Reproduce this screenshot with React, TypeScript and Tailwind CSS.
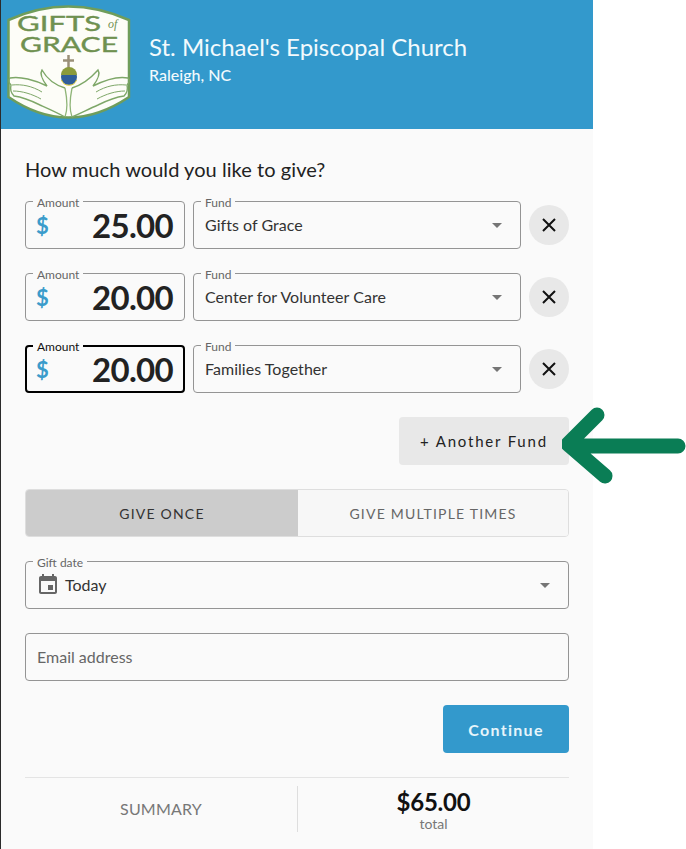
import React from "react";

const font = { fontFamily: '"Lato", "Liberation Sans", sans-serif' };

function Logo() {
  return (
    <svg width="124" height="118" viewBox="7 2 124 118" className="shrink-0">
      <path d="M8.5 20 Q68 -7 129 20 L129 97 Q68 138 8.5 97 Z" fill="#fdfdf8" stroke="#6f9d5b" strokeWidth="2.5" />
      <text x="17" y="31" fontFamily="Lato, sans-serif" fontSize="22" fill="#6f9150" stroke="#6f9150" strokeWidth="0.4" textLength="84" lengthAdjust="spacingAndGlyphs">GIFTS</text>
      <text x="108" y="28" fontFamily="Liberation Serif, serif" fontStyle="italic" fontSize="12" fill="#6f9150">of</text>
      <text x="20" y="52" fontFamily="Lato, sans-serif" fontSize="22" fill="#6f9150" stroke="#6f9150" strokeWidth="0.4" textLength="98" lengthAdjust="spacingAndGlyphs">GRACE</text>
      <path d="M68.500 55v14M63 60.500h11" stroke="#9a9078" strokeWidth="2.500" fill="none" />
      <circle cx="69" cy="77" r="8" fill="#2f5e9a" />
      <path d="M61 75a8 8 0 0 1 16 0z" fill="#8a9a3c" />
      <path d="M61.500 80a8 8 0 0 0 15 0" stroke="#d9c52f" strokeWidth="1" fill="none" />
      <path d="M65 117c3-8 2-19 0-29M72 117c-3-8-2-19 0-29" stroke="#8fb578" strokeWidth="1.300" fill="none" />
      <path d="M65 88C55 85 47 79 42 70c-2 3-1 8 5 16C35 80 20 76 10 78c-2 2-1 5 1 7-1 4 0 8 3 11 8 1 18 5 26 9 9 4 16 7 25 12" fill="none" stroke="#7ea768" strokeWidth="1.400" />
      <path d="M72 88c10-3 18-9 26-18 2 3 1 8-5 16 12-6 25-10 35-8 2 2 1 5-1 7 1 4 0 8-3 11-8 1-18 5-26 9-9 4-15 7-26 12" fill="none" stroke="#7ea768" strokeWidth="1.400" />
      <path d="M12 85c10-1 20 1 30 7M13 91c9 0 19 3 28 8M126 85c-10-1-20 1-30 7M125 91c-9 0-19 3-28 8" stroke="#7ea768" strokeWidth="1" fill="none" />
    </svg>
  );
}

function Field({ label, focused, className, children }: { label?: string; focused?: boolean; className?: string; children: React.ReactNode }) {
  return (
    <div className={`relative h-12 rounded flex items-center ${focused ? "border-2 border-black" : "border border-[#949494]"} ${className ?? ""}`}>
      {label && (
        <span className={`absolute bg-[#fafafa] px-1 text-[12px] leading-[14px] ${focused ? "left-[6px] top-[-7px] text-[#111]" : "left-[7px] top-[-6px] text-[#666]"}`}>
          {label}
        </span>
      )}
      {children}
    </div>
  );
}

function Caret() {
  return <span className="ml-auto mr-[18px] w-0 h-0 border-x-[5px] border-x-transparent border-t-[5px] border-t-[#757575]" />;
}

function Row({ amount, fund, focused }: { amount: string; fund: string; focused?: boolean }) {
  return (
    <div className="flex items-center h-12">
      <Field label="Amount" focused={focused} className="w-[160px] shrink-0">
        <span className={`${focused ? "ml-[9px]" : "ml-[10px]"} text-[22px] font-bold text-[#3b9ccb]`}>$</span>
        <span className={`ml-auto ${focused ? "mr-[10px]" : "mr-[11px]"} mt-[2px] text-[33px] font-bold tracking-[-0.7px] text-[#222]`}>{amount}</span>
      </Field>
      <Field label="Fund" className="w-[328px] ml-2 shrink-0">
        <span className="ml-[11px] text-[16px] tracking-[0.04px] text-[#333]">{fund}</span>
        <Caret />
      </Field>
      <button className="ml-2 w-10 h-10 rounded-full bg-[#e8e8e8] flex items-center justify-center shrink-0">
        <svg width="14" height="14" viewBox="0 0 14 14"><path d="M1 1l12 12M13 1L1 13" stroke="#111" strokeWidth="2" /></svg>
      </button>
    </div>
  );
}

export default function App() {
  return (
    <div className="relative w-[686px] h-[849px] bg-white overflow-hidden" style={font}>
      <div className="w-[593px] h-full bg-[#fafafa] border-l border-[#2b2b2b] flex flex-col">
        <header className="h-[129px] bg-[#3399cc] flex items-start pl-[6px] pt-[2px] shrink-0">
          <Logo />
          <div className="ml-[18px] mt-[27px] text-[#f2fafd]">
            <div className="text-[24px] leading-[36px]">St. Michael's Episcopal Church</div>
            <div className="text-[16px] leading-[24px] font-medium mt-[-2px]">Raleigh, NC</div>
          </div>
        </header>

        <main className="pl-6 w-[568px] flex flex-col">
          <h1 className="mt-[25px] text-[20px] leading-[30px] tracking-[0.06px] text-[#222] font-normal">How much would you like to give?</h1>
          <div className="mt-[17px] flex flex-col gap-6">
            <Row amount="25.00" fund="Gifts of Grace" />
            <Row amount="20.00" fund="Center for Volunteer Care" />
            <Row amount="20.00" fund="Families Together" focused />
          </div>

          <div className="mt-6 flex justify-end">
            <button className="w-[170px] h-12 rounded bg-[#e8e8e8] text-[15px] tracking-[1.8px] text-[#222]">+ Another Fund</button>
          </div>

          <div className="mt-6 h-12 flex rounded border border-[#dedede] overflow-hidden text-[14px] tracking-[1.2px]">
            <div className="w-[272px] bg-[#cccccc] flex items-center justify-center text-[#333]">GIVE ONCE</div>
            <div className="flex-1 bg-[#f7f7f7] flex items-center justify-center text-[#666]">GIVE MULTIPLE TIMES</div>
          </div>

          <Field label="Gift date" className="mt-6">
            <svg width="24" height="24" viewBox="0 0 24 24" className="ml-[10px] shrink-0" fill="#666">
              <path d="M17 12h-5v5h5v-5zM16 1v2H8V1H6v2H5c-1.11 0-1.99.9-1.99 2L3 19c0 1.1.89 2 2 2h14c1.1 0 2-.9 2-2V5c0-1.1-.9-2-2-2h-1V1h-2zm3 18H5V8h14v11z" />
            </svg>
            <span className="ml-[5px] text-[16px] text-[#333]">Today</span>
            <Caret />
          </Field>

          <Field className="mt-6">
            <span className="ml-[11px] text-[16px] text-[#666]">Email address</span>
          </Field>

          <div className="mt-6 flex justify-end">
            <button className="w-[126px] h-12 rounded bg-[#3399cc] pt-[1px] text-[16px] font-bold tracking-[1.3px] text-[#e6f5fb]">Continue</button>
          </div>

          <div className="mt-6 border-t border-[#e4e4e4] flex items-start h-[71px]">
            <div className="w-[272px] h-[46px] mt-2 flex items-center justify-center text-[16px] tracking-[0.2px] text-[#777]">SUMMARY</div>
            <div className="flex-1 h-[46px] mt-2 border-l border-[#dedede] flex flex-col items-center">
              <div className="text-[24px] leading-[32px] font-bold text-[#111] tracking-[-0.2px]">$65.00</div>
              <div className="text-[14px] leading-[16px] mt-[-2px] text-[#777]">total</div>
            </div>
          </div>
        </main>
      </div>

      <svg width="130" height="80" viewBox="0 0 130 80" className="absolute left-[562px] top-[406px]" fill="none" stroke="#0a7d55" strokeWidth="15" strokeLinecap="round" strokeLinejoin="round">
        <path d="M116 40H8M35 9L6 38L43 70" />
      </svg>
    </div>
  );
}
